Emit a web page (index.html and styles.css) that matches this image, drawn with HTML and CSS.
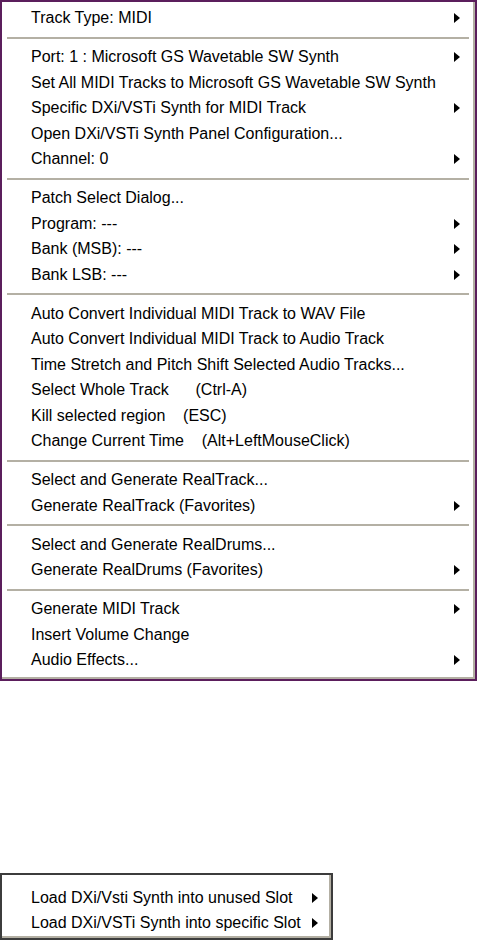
FILE: index.html
```html
<!DOCTYPE html>
<html>
<head>
<meta charset="utf-8">
<link rel="stylesheet" href="styles.css">
</head>
<body>
<div class="page">
  <div class="menu main">
    <div class="item"><span class="label">Track Type: MIDI</span><span class="arrow"></span></div>
    <div class="sep"></div>
    <div class="item"><span class="label">Port: 1 : Microsoft GS Wavetable SW Synth</span><span class="arrow"></span></div>
    <div class="item"><span class="label">Set All MIDI Tracks to Microsoft GS Wavetable SW Synth</span></div>
    <div class="item"><span class="label">Specific DXi/VSTi Synth for MIDI Track</span><span class="arrow"></span></div>
    <div class="item"><span class="label">Open DXi/VSTi Synth Panel Configuration...</span></div>
    <div class="item"><span class="label">Channel: 0</span><span class="arrow"></span></div>
    <div class="sep"></div>
    <div class="item"><span class="label">Patch Select Dialog...</span></div>
    <div class="item"><span class="label">Program: ---</span><span class="arrow"></span></div>
    <div class="item"><span class="label">Bank (MSB): ---</span><span class="arrow"></span></div>
    <div class="item"><span class="label">Bank LSB: ---</span><span class="arrow"></span></div>
    <div class="sep"></div>
    <div class="item"><span class="label">Auto Convert Individual MIDI Track to WAV File</span></div>
    <div class="item"><span class="label">Auto Convert Individual MIDI Track to Audio Track</span></div>
    <div class="item"><span class="label">Time Stretch and Pitch Shift Selected Audio Tracks...</span></div>
    <div class="item"><span class="label">Select Whole Track      (Ctrl-A)</span></div>
    <div class="item"><span class="label">Kill selected region    (ESC)</span></div>
    <div class="item"><span class="label">Change Current Time    (Alt+LeftMouseClick)</span></div>
    <div class="sep"></div>
    <div class="item"><span class="label">Select and Generate RealTrack...</span></div>
    <div class="item"><span class="label">Generate RealTrack (Favorites)</span><span class="arrow"></span></div>
    <div class="sep"></div>
    <div class="item"><span class="label">Select and Generate RealDrums...</span></div>
    <div class="item"><span class="label">Generate RealDrums (Favorites)</span><span class="arrow"></span></div>
    <div class="sep"></div>
    <div class="item"><span class="label">Generate MIDI Track</span><span class="arrow"></span></div>
    <div class="item"><span class="label">Insert Volume Change</span></div>
    <div class="item"><span class="label">Audio Effects...</span><span class="arrow"></span></div>
  </div>

  <div class="menu small">
    <div class="item"><span class="label">Load DXi/Vsti Synth into unused Slot</span><span class="arrow"></span></div>
    <div class="item"><span class="label">Load DXi/VSTi Synth into specific Slot</span><span class="arrow"></span></div>
  </div>
</div>
</body>
</html>
```

FILE: styles.css
```css
html, body {
  margin: 0;
  padding: 0;
  background: #ffffff;
}

body {
  font-family: "Liberation Sans", Arial, sans-serif;
  font-size: 16px;
  color: #000000;
}

.page {
  display: flex;
  flex-direction: column;
  align-items: flex-start;
  width: 477px;
}

.menu {
  box-sizing: border-box;
  background: #ffffff;
  display: flex;
  flex-direction: column;
}

.main {
  width: 477px;
  height: 681px;
  border: 2px solid #5b1e5c;
  box-shadow: inset -2px -2px 0 #b3afa3;
  padding: 3.25px 0 4.25px 0;
}

.small {
  width: 333px;
  height: 67px;
  margin-top: 192px;
  border: 2px solid #3c3c3c;
  box-shadow: inset -2px -2px 0 #b3afa3;
  padding: 10px 0 2px 0;
}

.item {
  height: 25.5px;
  flex: 0 0 25.5px;
  display: flex;
  align-items: center;
  padding: 0 15px 0 29px;
}

.small .item {
  padding: 0 13px 0 29px;
}

.label {
  flex: 1;
  white-space: pre;
}

.arrow {
  width: 0;
  height: 0;
  border-left: 6px solid #000000;
  border-top: 5px solid transparent;
  border-bottom: 5px solid transparent;
}

.sep {
  flex: 0 0 2px;
  height: 2px;
  margin: 5.75px 6px 5.75px 5px;
  background: #b4b0a4;
}
```
